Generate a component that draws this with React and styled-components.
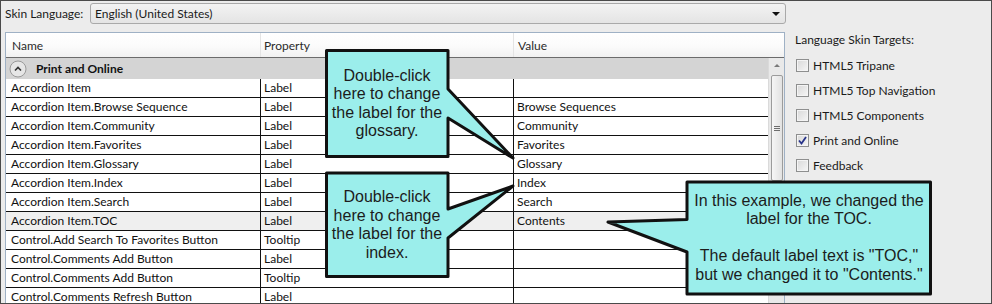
import React from "react";
import styled, { createGlobalStyle } from "styled-components";

const GlobalStyle = createGlobalStyle`
  html, body {
    margin: 0;
    padding: 0;
    background: #ececec;
  }
  body {
    overflow: hidden;
  }
`;

const UI_FONT = `"Lato", "Liberation Sans", sans-serif`;
const NOTE_FONT = `"Liberation Sans", Arial, sans-serif`;

const Frame = styled.div`
  position: relative;
  width: 992px;
  height: 304px;
  box-sizing: border-box;
  background: #ececec;
  display: flex;
  overflow: hidden;
  font-family: ${UI_FONT};
  font-size: 12px;
  color: #1a1a1a;

  &::after {
    content: "";
    position: absolute;
    inset: 0;
    border: 1px solid #4a4a4a;
    pointer-events: none;
    z-index: 6;
  }
`;

const LeftPane = styled.div`
  width: 786px;
  flex: none;
  box-sizing: border-box;
  padding: 3px 0 0 5px;
  display: flex;
  flex-direction: column;
`;

const TopBar = styled.div`
  display: flex;
  align-items: center;
  height: 21px;
`;

const FieldLabel = styled.span`
  width: 85px;
  flex: none;
`;

const Dropdown = styled.div`
  flex: 1;
  height: 21px;
  box-sizing: border-box;
  border: 1px solid #a9a9a9;
  border-radius: 3px;
  background: linear-gradient(#f3f3f3, #e4e4e4);
  display: flex;
  align-items: center;
  justify-content: space-between;
  padding: 0 5px 0 4px;
`;

const DropArrow = styled.span`
  width: 0;
  height: 0;
  border-left: 4px solid transparent;
  border-right: 4px solid transparent;
  border-top: 4px solid #111;
`;

const Table = styled.div`
  width: 780px;
  margin-top: 8px;
  flex: 1;
  box-sizing: border-box;
  border: 1px solid #9fb1c5;
  border-bottom: none;
  background: #fff;
  display: flex;
  flex-direction: column;
  min-height: 0;
`;

const COLS = "255px 253px 254px";

const HeaderRow = styled.div`
  display: grid;
  grid-template-columns: ${COLS} 16px;
  height: 25px;
  box-sizing: border-box;
  border-bottom: 1px solid #6b6b6b;
  background: linear-gradient(#ffffff, #fbfbfb 55%, #f1f1f1);
`;

const HeaderCell = styled.div`
  display: flex;
  align-items: center;
  padding-left: ${(p) => p.$pad}px;
  color: #2b2b2b;
  border-right: 1px solid ${(p) => (p.$sep ? "#e4e4e4" : "transparent")};
`;

const Body = styled.div`
  display: flex;
  flex: 1;
  min-height: 0;
`;

const Rows = styled.div`
  width: 762px;
  display: flex;
  flex-direction: column;
  overflow: hidden;
`;

const GroupRow = styled.div`
  height: 21px;
  flex: none;
  background: #d4d4d4;
  display: flex;
  align-items: center;
  gap: 9px;
  padding-left: 3px;
  font-weight: bold;
  color: #111;
`;

const Row = styled.div`
  display: grid;
  grid-template-columns: ${COLS};
  height: 19px;
  flex: none;
  box-sizing: border-box;
  border-bottom: 1px solid #111;
  background: ${(p) => (p.$active ? "#efefef" : "#fff")};
`;

const Cell = styled.div`
  padding-left: ${(p) => p.$pad}px;
  line-height: 18px;
  white-space: nowrap;
  overflow: hidden;
  color: #111;
  border-right: 1px solid ${(p) => (p.$sep ? "#111" : "transparent")};
`;

const Scrollbar = styled.div`
  width: 16px;
  flex: none;
  box-sizing: border-box;
  background: #e9e9e9;
  border-left: 1px solid #dadada;
  display: flex;
  flex-direction: column;
  align-items: center;
  padding-top: 6px;
`;

const ScrollUp = styled.span`
  width: 0;
  height: 0;
  border-left: 3px solid transparent;
  border-right: 3px solid transparent;
  border-bottom: 3px solid #7a7a7a;
`;

const Thumb = styled.div`
  margin-top: 8px;
  width: 12px;
  height: 106px;
  box-sizing: border-box;
  border: 1px solid #9c9c9c;
  border-radius: 2px;
  background: linear-gradient(to right, #f6f6f6, #e2e2e2);
  display: flex;
  flex-direction: column;
  align-items: center;
  justify-content: center;
  gap: 1px;
`;

const Grip = styled.span`
  width: 6px;
  height: 1px;
  background: #6e6e6e;
`;

const RightPane = styled.div`
  flex: 1;
  padding: 32px 0 0 9px;
  display: flex;
  flex-direction: column;
`;

const PaneTitle = styled.div`
  height: 16px;
  line-height: 16px;
  margin-bottom: 5px;
`;

const CheckRow = styled.label`
  height: 25px;
  display: flex;
  align-items: center;
  gap: 4px;
  padding-left: 1px;
`;

const Box = styled.span`
  width: 13px;
  height: 13px;
  box-sizing: border-box;
  border: 1px solid #8e8f8f;
  background: linear-gradient(135deg, #d8d8d8, #f6f6f6);
  box-shadow: inset 0 0 0 1px #f4f4f4;
  display: flex;
  align-items: center;
  justify-content: center;
`;

const CalloutLayer = styled.svg`
  position: absolute;
  left: 0;
  top: 0;
  z-index: 3;
  pointer-events: none;
`;

const CalloutText = styled.div.attrs((p) => ({
  style: { left: p.$x, top: p.$y, width: p.$w, height: p.$h },
}))`
  position: absolute;
  z-index: 4;
  display: flex;
  align-items: center;
  justify-content: center;
  text-align: center;
  white-space: nowrap;
  font-family: ${NOTE_FONT};
  font-size: 16px;
  line-height: 18.5px;
  color: #1c1c1c;
`;

const rows = [
  ["Accordion Item", "Label", ""],
  ["Accordion Item.Browse Sequence", "Label", "Browse Sequences"],
  ["Accordion Item.Community", "Label", "Community"],
  ["Accordion Item.Favorites", "Label", "Favorites"],
  ["Accordion Item.Glossary", "Label", "Glossary"],
  ["Accordion Item.Index", "Label", "Index"],
  ["Accordion Item.Search", "Label", "Search"],
  ["Accordion Item.TOC", "Label", "Contents", true],
  ["Control.Add Search To Favorites Button", "Tooltip", ""],
  ["Control.Comments Add Button", "Label", ""],
  ["Control.Comments Add Button", "Tooltip", ""],
  ["Control.Comments Refresh Button", "Label", ""],
];

const targets = [
  ["HTML5 Tripane", false],
  ["HTML5 Top Navigation", false],
  ["HTML5 Components", false],
  ["Print and Online", true],
  ["Feedback", false],
];

const callouts = [
  {
    points: "326.5,50.5 448,50.5 448,89 513,158 448,118 448,156.5 326.5,156.5",
    box: [326, 50, 122, 107],
    lines: ["Double-click", "here to change", "the label for the", "glossary."],
  },
  {
    points: "326.5,173 448,173 448,209 513,186 448,238 448,276.5 326.5,276.5",
    box: [326, 173, 122, 104],
    lines: ["Double-click", "here to change", "the label for the", "index."],
  },
  {
    points: "687,182 930.5,182 930.5,294 687,294 687,252 608,222 687,219.5",
    box: [687, 182, 244, 112],
    lines: [
      "In this example, we changed the",
      "label for the TOC.",
      "\u00a0",
      'The default label text is "TOC,"',
      'but we changed it to "Contents."',
    ],
  },
];

const ExpandIcon = () => (
  <svg width="18" height="18" viewBox="0 0 18 18">
    <circle cx="9" cy="9" r="8" fill="#e6e6e6" stroke="#9a9a9a" />
    <path d="M6 10.5 L9 7.5 L12 10.5" fill="none" stroke="#333" strokeWidth="1.6" />
  </svg>
);

const Check = () => (
  <svg width="9" height="9" viewBox="0 0 9 9">
    <path d="M1 4.5 L3.5 7.5 L8 1" fill="none" stroke="#27338a" strokeWidth="1.8" />
  </svg>
);

export default function App() {
  return (
    <>
      <GlobalStyle />
      <Frame>
        <LeftPane>
          <TopBar>
            <FieldLabel>Skin Language:</FieldLabel>
            <Dropdown>
              <span>English (United States)</span>
              <DropArrow />
            </Dropdown>
          </TopBar>
          <Table>
            <HeaderRow>
              <HeaderCell $pad={6} $sep>Name</HeaderCell>
              <HeaderCell $pad={3} $sep>Property</HeaderCell>
              <HeaderCell $pad={4}>Value</HeaderCell>
              <HeaderCell $pad={0} />
            </HeaderRow>
            <Body>
              <Rows>
                <GroupRow>
                  <ExpandIcon />
                  Print and Online
                </GroupRow>
                {rows.map(([name, prop, value, active], i) => (
                  <Row key={i} $active={active}>
                    <Cell $pad={5} $sep>{name}</Cell>
                    <Cell $pad={3} $sep>{prop}</Cell>
                    <Cell $pad={3}>{value}</Cell>
                  </Row>
                ))}
              </Rows>
              <Scrollbar>
                <ScrollUp />
                <Thumb>
                  <Grip />
                  <Grip />
                  <Grip />
                </Thumb>
              </Scrollbar>
            </Body>
          </Table>
        </LeftPane>
        <RightPane>
          <PaneTitle>Language Skin Targets:</PaneTitle>
          {targets.map(([label, checked]) => (
            <CheckRow key={label}>
              <Box>{checked && <Check />}</Box>
              {label}
            </CheckRow>
          ))}
        </RightPane>

        <CalloutLayer width="992" height="304" viewBox="0 0 992 304">
          {callouts.map((c, i) => (
            <polygon
              key={i}
              points={c.points}
              fill="#9beeeb"
              stroke="#111"
              strokeWidth="3"
              strokeLinejoin="round"
            />
          ))}
        </CalloutLayer>
        {callouts.map((c, i) => (
          <CalloutText key={i} $x={c.box[0]} $y={c.box[1]} $w={c.box[2]} $h={c.box[3]}>
            <div>
              {c.lines.map((l, j) => (
                <div key={j}>{l}</div>
              ))}
            </div>
          </CalloutText>
        ))}
      </Frame>
    </>
  );
}
